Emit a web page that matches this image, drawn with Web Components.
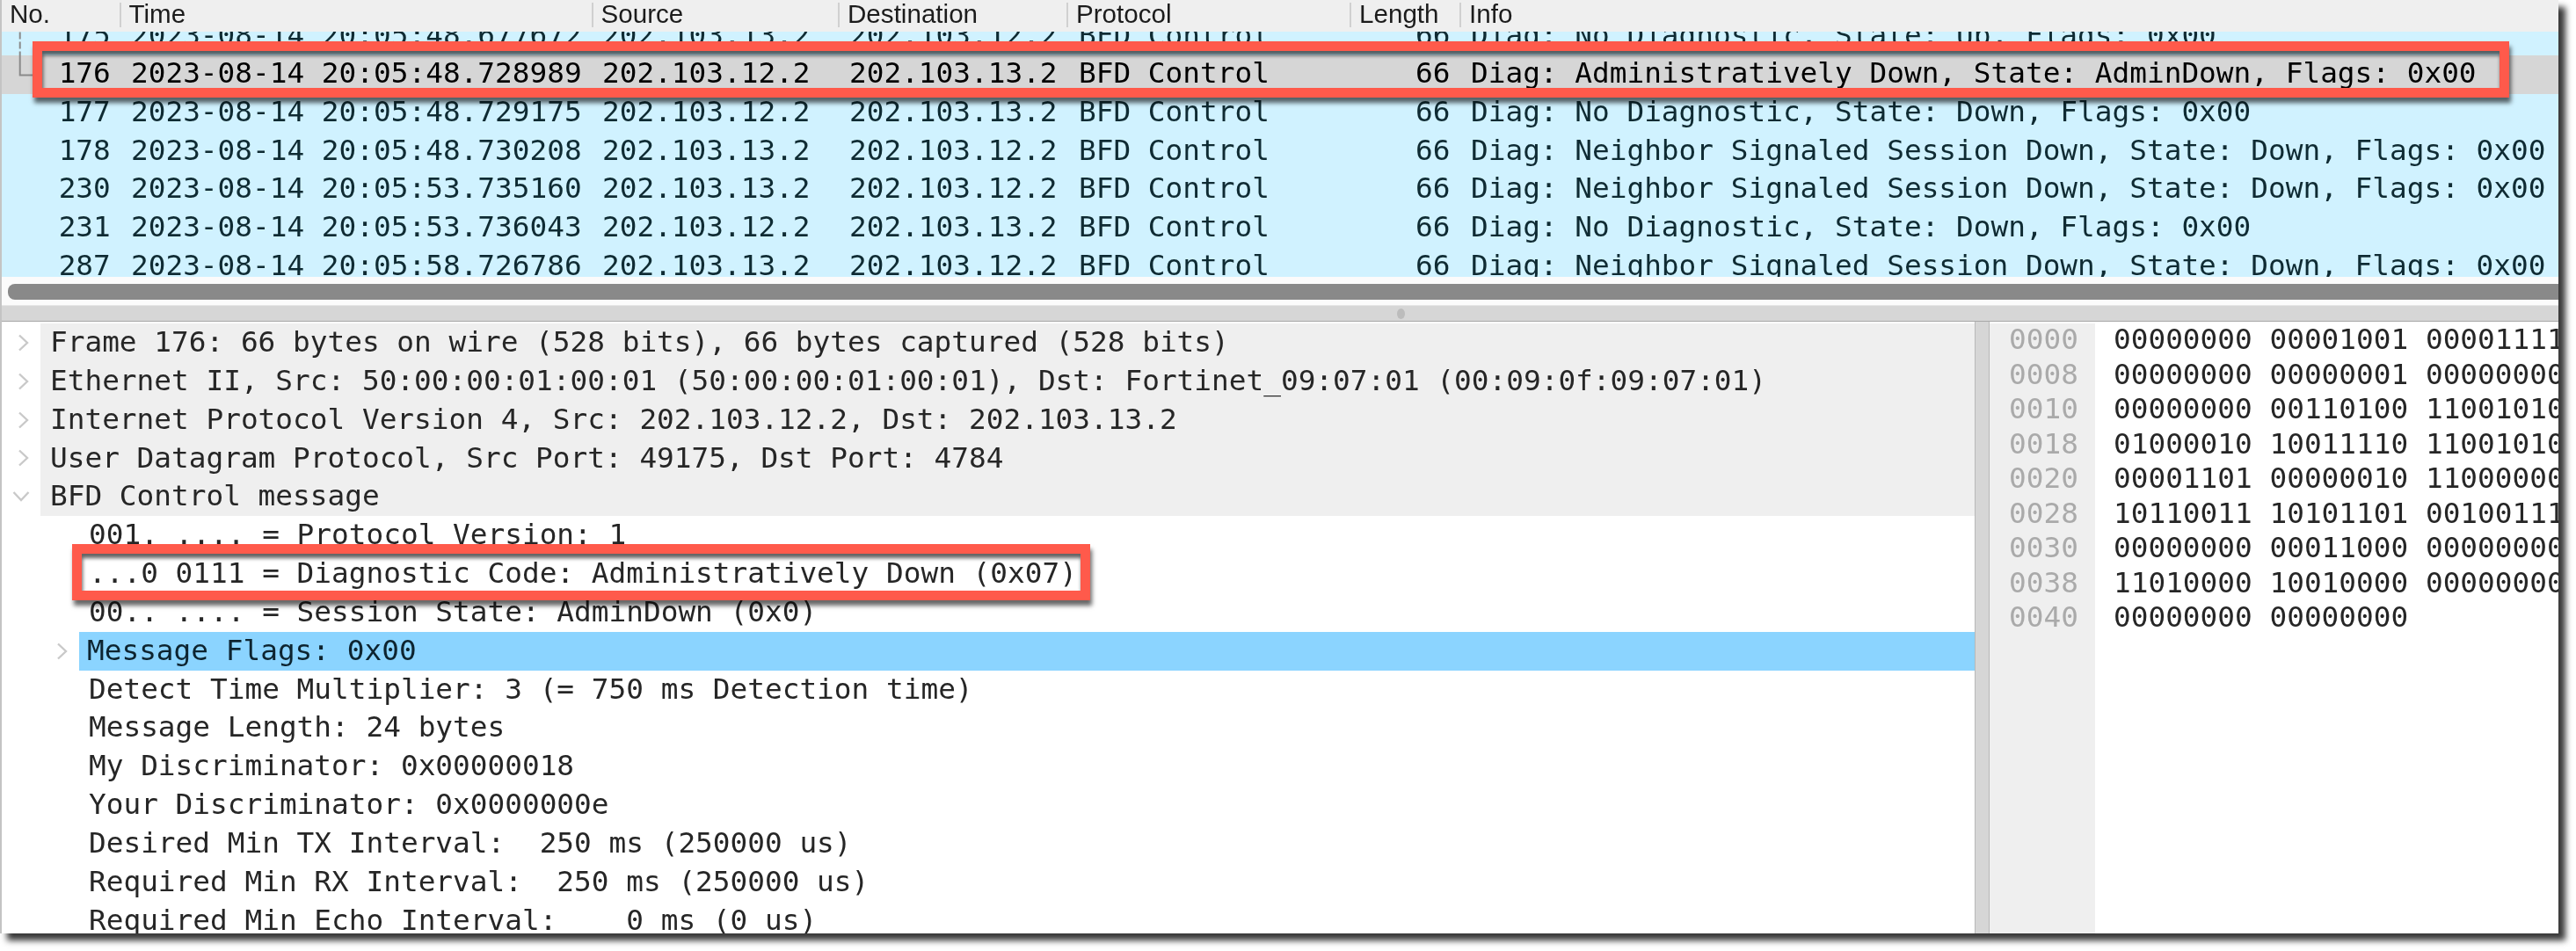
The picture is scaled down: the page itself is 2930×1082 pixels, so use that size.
<!DOCTYPE html>
<html>
<head>
<meta charset="utf-8">
<title>BFD capture</title>
<style>
  html, body { margin: 0; padding: 0; background: #fff; }
  body { width: 2930px; height: 1082px; overflow: hidden; }
</style>
</head>
<body>
<shark-window>
  <packet-list slot="list">
    <packet-row no="175" time="2023-08-14 20:05:48.677672" src="202.103.13.2" dst="202.103.12.2" info="Diag: No Diagnostic, State: Up, Flags: 0x00"></packet-row>
    <packet-row selected no="176" time="2023-08-14 20:05:48.728989" src="202.103.12.2" dst="202.103.13.2" info="Diag: Administratively Down, State: AdminDown, Flags: 0x00"></packet-row>
    <packet-row no="177" time="2023-08-14 20:05:48.729175" src="202.103.12.2" dst="202.103.13.2" info="Diag: No Diagnostic, State: Down, Flags: 0x00"></packet-row>
    <packet-row no="178" time="2023-08-14 20:05:48.730208" src="202.103.13.2" dst="202.103.12.2" info="Diag: Neighbor Signaled Session Down, State: Down, Flags: 0x00"></packet-row>
    <packet-row no="230" time="2023-08-14 20:05:53.735160" src="202.103.13.2" dst="202.103.12.2" info="Diag: Neighbor Signaled Session Down, State: Down, Flags: 0x00"></packet-row>
    <packet-row no="231" time="2023-08-14 20:05:53.736043" src="202.103.12.2" dst="202.103.13.2" info="Diag: No Diagnostic, State: Down, Flags: 0x00"></packet-row>
    <packet-row no="287" time="2023-08-14 20:05:58.726786" src="202.103.13.2" dst="202.103.12.2" info="Diag: Neighbor Signaled Session Down, State: Down, Flags: 0x00"></packet-row>
  </packet-list>
  <detail-tree slot="tree">
    <detail-row shaded arrow="right">Frame 176: 66 bytes on wire (528 bits), 66 bytes captured (528 bits)</detail-row>
    <detail-row shaded arrow="right">Ethernet II, Src: 50:00:00:01:00:01 (50:00:00:01:00:01), Dst: Fortinet_09:07:01 (00:09:0f:09:07:01)</detail-row>
    <detail-row shaded arrow="right">Internet Protocol Version 4, Src: 202.103.12.2, Dst: 202.103.13.2</detail-row>
    <detail-row shaded arrow="right">User Datagram Protocol, Src Port: 49175, Dst Port: 4784</detail-row>
    <detail-row shaded arrow="down">BFD Control message</detail-row>
    <detail-row level="1">001. .... = Protocol Version: 1</detail-row>
    <detail-row level="1">...0 0111 = Diagnostic Code: Administratively Down (0x07)</detail-row>
    <detail-row level="1">00.. .... = Session State: AdminDown (0x0)</detail-row>
    <detail-row level="1" selected arrow="right">Message Flags: 0x00</detail-row>
    <detail-row level="1">Detect Time Multiplier: 3 (= 750 ms Detection time)</detail-row>
    <detail-row level="1">Message Length: 24 bytes</detail-row>
    <detail-row level="1">My Discriminator: 0x00000018</detail-row>
    <detail-row level="1">Your Discriminator: 0x0000000e</detail-row>
    <detail-row level="1">Desired Min TX Interval:  250 ms (250000 us)</detail-row>
    <detail-row level="1">Required Min RX Interval:  250 ms (250000 us)</detail-row>
    <detail-row level="1">Required Min Echo Interval:    0 ms (0 us)</detail-row>
  </detail-tree>
  <hex-pane slot="hex"></hex-pane>
  <call-out style="left:35px;top:47px;width:2817px;height:64px"></call-out>
  <call-out style="left:79.500px;top:619px;width:1158px;height:64px"></call-out>
</shark-window>

<script>
const MONO = `"DejaVu Sans Mono", monospace`;

class SharkWindow extends HTMLElement {
  constructor() {
    super();
    this.attachShadow({ mode: "open" });
    this.shadowRoot.innerHTML = /* html */`
    <style>
      :host {
        display: flex;
        flex-direction: column;
        position: relative;
        width: 2910px;
        height: 1062px;
        box-sizing: border-box;
        border-left: 2px solid #c4c4c4;
        background: #fff;
        box-shadow: 8px 8px 7px rgba(0, 0, 0, .78);
        font-family: ${MONO};
        filter: blur(.4px);
      }
      .head {
        display: grid;
        grid-template-columns: 135.5px 537px 280.5px 260px 322px 125px 1fr;
        height: 36px;
        flex: none;
        background: #efefef;
        font: 29.6px/26px "Liberation Sans", sans-serif;
        color: #1c1c1c;
      }
      .head span { padding-left: 9px; margin-top: 3px; height: 28px; border-right: 2px solid #d0d0d0; }
      .head span:last-child { border-right: 0; }
      .list { height: 279px; flex: none; overflow: hidden; background: #d0f2ff; }
      .scroll { height: 32px; flex: none; box-sizing: border-box; padding: 8px 0 6px 7px; background: #fbfbfb; }
      .thumb { height: 18px; background: #898989; border-radius: 8px 0 0 8px; }
      .split {
        height: 19px;
        flex: none;
        display: flex;
        align-items: center;
        justify-content: center;
        background: #d6d6d6;
        border-top: 1px solid #e6e6e6;
        border-bottom: 1px solid #a8a8a8;
        box-sizing: border-box;
      }
      .dot { width: 9px; height: 12px; border-radius: 50%; background: #bcbcbc; margin-left: 274px; }
      .panes { flex: 1; min-height: 0; display: flex; }
      .tree { width: 2244px; flex: none; overflow: hidden; padding-top: 2px; box-sizing: border-box; }
      .gutter { width: 17px; flex: none; box-sizing: border-box; background: #d6d6d6; border-left: 1px solid #b8b8b8; border-right: 1px solid #b8b8b8; }
      .hex { flex: 1; min-width: 0; overflow: hidden; padding-top: 2px; box-sizing: border-box; }
    </style>
    <div class="head">
      <span>No.</span><span>Time</span><span>Source</span><span>Destination</span><span>Protocol</span><span>Length</span><span>Info</span>
    </div>
    <div class="list"><slot name="list"></slot></div>
    <div class="scroll"><div class="thumb"></div></div>
    <div class="split"><div class="dot"></div></div>
    <div class="panes">
      <div class="tree"><slot name="tree"></slot></div>
      <div class="gutter"></div>
      <div class="hex"><slot name="hex"></slot></div>
    </div>
    <slot></slot>`;
  }
}

class PacketList extends HTMLElement {
  constructor() {
    super();
    this.attachShadow({ mode: "open" });
    this.shadowRoot.innerHTML = /* html */`
    <style>
      :host { display: block; position: relative; margin-top: -16.4px; }
      svg { position: absolute; left: 0; top: 0; }
    </style>
    <slot></slot>
    <svg width="40" height="110" viewBox="0 0 40 110">
      <path d="M20.7 16.400v22" stroke="#8a8a8a" stroke-width="2" stroke-dasharray="8 3" fill="none"/>
      <path d="M20.7 38.400v27H36" stroke="#8a8a8a" stroke-width="2" fill="none"/>
    </svg>`;
  }
}

class PacketRow extends HTMLElement {
  constructor() {
    super();
    this.attachShadow({ mode: "open" });
  }

  connectedCallback() {
    const a = n => this.getAttribute(n);
    this.shadowRoot.innerHTML = /* html */`
    <style>
      :host {
        display: grid;
        grid-template-columns: 123.800px 23.200px 536px 281px 261px 301.500px 121px 1fr;
        height: 43.67px;
        line-height: 40.5px;
        font-size: 32.75px;
        color: #0f2b33;
        white-space: pre;
        overflow: hidden;
        font-family: ${MONO};
      }
      :host([selected]) { background: #d6d6d6; color: #000; }
      .no { text-align: right; }
      .len { text-align: right; }
      .info { padding-left: 23.500px; }
    </style>
    <span class="no">${a("no")}</span><span></span>
    <span>${a("time")}</span>
    <span>${a("src")}</span>
    <span>${a("dst")}</span>
    <span>BFD Control</span>
    <span class="len">66</span>
    <span class="info">${a("info")}</span>`;
  }
}

class DetailTree extends HTMLElement {
  constructor() {
    super();
    this.attachShadow({ mode: "open" });
    this.shadowRoot.innerHTML = `<style>:host { display: block; }</style><slot></slot>`;
  }
}

class DetailRow extends HTMLElement {
  constructor() {
    super();
    this.attachShadow({ mode: "open" });
  }

  connectedCallback() {
    const arrow = this.getAttribute("arrow");
    const icons = {
      right: `<svg width="14" height="20" viewBox="0 0 14 20"><path d="M2 1.500 L11 10 L2 18.500" fill="none" stroke="#c9c9c9" stroke-width="2.400"/></svg>`,
      down: `<svg width="20" height="14" viewBox="0 0 20 14"><path d="M1.500 2 L10 11 L18.500 2" fill="none" stroke="#c9c9c9" stroke-width="2.400"/></svg>`
    };
    this.shadowRoot.innerHTML = /* html */`
    <style>
      :host {
        display: flex;
        height: 43.85px;
        line-height: 43.85px;
        font-size: 32.75px;
        color: #262626;
        white-space: pre;
        font-family: ${MONO};
      }
      .arrow { width: 44px; flex: none; display: flex; align-items: center; justify-content: center; box-sizing: border-box; }
      :host([arrow="right"]) .arrow { padding-left: 6px; }
      .body { flex: 1; min-width: 0; padding-left: 11px; overflow: hidden; }
      :host([shaded]) .body { background: #efefef; }
      :host([selected]) .body { background: #8bd4ff; color: #0d2430; padding-left: 9px; line-height: 42.5px; }
      :host([level="1"]) .arrow { width: 88px; justify-content: flex-end; padding-left: 0; padding-right: 12px; }
    </style>
    <div class="arrow">${arrow ? icons[arrow] : ""}</div>
    <div class="body"><slot></slot></div>`;
  }
}

class HexPane extends HTMLElement {
  constructor() {
    super();
    this.attachShadow({ mode: "open" });
    const lines = [
      ["0000", "00000000 00001001 00001111"],
      ["0008", "00000000 00000001 00000000"],
      ["0010", "00000000 00110100 11001010"],
      ["0018", "01000010 10011110 11001010"],
      ["0020", "00001101 00000010 11000000"],
      ["0028", "10110011 10101101 00100111"],
      ["0030", "00000000 00011000 00000000"],
      ["0038", "11010000 10010000 00000000"],
      ["0040", "00000000 00000000"]
    ];
    this.shadowRoot.innerHTML = /* html */`
    <style>
      :host {
        display: grid;
        grid-template-columns: 120px 1fr;
        height: 100%;
        font-size: 32.75px;
        line-height: 37px;
        white-space: pre;
        font-family: ${MONO};
      }
      .off { background: #efefef; color: #aaa; padding-left: 22px; }
      .bits { color: #262626; padding-left: 21px; overflow: hidden; }
      div div { height: 39.5px; }
    </style>
    <div class="off">${lines.map(l => `<div>${l[0]}</div>`).join("")}</div>
    <div class="bits">${lines.map(l => `<div>${l[1]}</div>`).join("")}</div>`;
  }
}

class CallOut extends HTMLElement {
  constructor() {
    super();
    this.attachShadow({ mode: "open" });
    this.shadowRoot.innerHTML = /* html */`
    <style>
      :host {
        display: block;
        position: absolute;
        box-sizing: border-box;
        border: 11px solid #ff5a4b;
        box-shadow: 2px 6px 5px rgba(0, 0, 0, .6), inset 1px 5px 4px rgba(0, 0, 0, .62);
        pointer-events: none;
      }
    </style>`;
  }
}

customElements.define("shark-window", SharkWindow);
customElements.define("packet-list", PacketList);
customElements.define("packet-row", PacketRow);
customElements.define("detail-tree", DetailTree);
customElements.define("detail-row", DetailRow);
customElements.define("hex-pane", HexPane);
customElements.define("call-out", CallOut);
</script>
</body>
</html>
